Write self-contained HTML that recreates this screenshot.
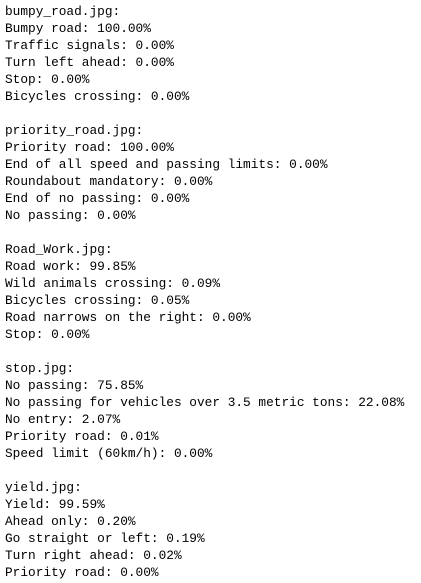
<!DOCTYPE html>
<html><head><meta charset="utf-8"><style>
html,body{margin:0;background:#fff;}
pre{margin:0;padding:3px 0 0 5px;font-family:"Liberation Mono",monospace;font-size:12.8px;line-height:17px;color:#000;}
</style></head><body><pre>bumpy_road.jpg:
Bumpy road: 100.00%
Traffic signals: 0.00%
Turn left ahead: 0.00%
Stop: 0.00%
Bicycles crossing: 0.00%

priority_road.jpg:
Priority road: 100.00%
End of all speed and passing limits: 0.00%
Roundabout mandatory: 0.00%
End of no passing: 0.00%
No passing: 0.00%

Road_Work.jpg:
Road work: 99.85%
Wild animals crossing: 0.09%
Bicycles crossing: 0.05%
Road narrows on the right: 0.00%
Stop: 0.00%

stop.jpg:
No passing: 75.85%
No passing for vehicles over 3.5 metric tons: 22.08%
No entry: 2.07%
Priority road: 0.01%
Speed limit (60km/h): 0.00%

yield.jpg:
Yield: 99.59%
Ahead only: 0.20%
Go straight or left: 0.19%
Turn right ahead: 0.02%
Priority road: 0.00%</pre></body></html>
